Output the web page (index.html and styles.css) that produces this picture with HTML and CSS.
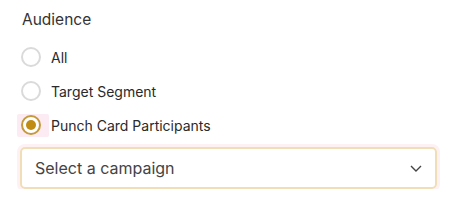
FILE: index.html
```html
<!DOCTYPE html>
<html>
<head lang="en">
    <meta charset="UTF-8">
    <title>Audience</title>
<link rel="stylesheet" href="styles.css">
</head>
<body>
<div class="audience">
    <div class="title">Audience</div>
    <label class="option">
        <span class="radio"></span>
        <span class="text">All</span>
    </label>
    <label class="option">
        <span class="radio"></span>
        <span class="text">Target Segment</span>
    </label>
    <label class="option">
        <span class="focus"><span class="radio checked"></span></span>
        <span class="text">Punch Card Participants</span>
    </label>
    <div class="select">
        <span>Select a campaign</span>
        <svg width="14" height="14" viewBox="0 0 14 14">
            <path d="M2 5 L7 10 L12 5" fill="none" stroke="#444" stroke-width="1.4"/>
        </svg>
    </div>
</div>
</body>
</html>
```

FILE: styles.css
```css
body {
	margin: 0;
	background: #fff;
	font-family: Inter, "Noto Sans", sans-serif;
	color: #2a2a2a;
}
.audience {
	padding: 10px 0 0 21px;
	width: 416px;
}
.title {
	font-size: 15.5px;
	line-height: 20px;
	margin-bottom: 15px;
	margin-left: 1px;
	color: #333;
}
.option {
	display: flex;
	align-items: center;
	height: 24px;
	margin-bottom: 10px;
	font-size: 14px;
}
.radio {
	width: 20px;
	height: 20px;
	border: 2px solid #dadada;
	border-radius: 50%;
	margin-right: 10px;
	box-sizing: border-box;
	position: relative;
	flex-shrink: 0;
	background: #fff;
}
.focus {
	display: flex;
	background: #fdebf3;
	border-radius: 2px;
	padding: 1px 8px 2px 4px;
	margin: -1px 2px -2px -4px;
}
.focus .radio {
	margin-right: 0;
}
.radio.checked {
	border-color: #c49a3a;
}
.radio.checked::after {
	content: "";
	position: absolute;
	left: 3px;
	top: 3px;
	width: 10px;
	height: 10px;
	border-radius: 50%;
	background: #c08d12;
}
.select {
	margin-left: -1px;
	margin-top: 4px;
	height: 42px;
	border: 2px solid #f1ddb6;
	border-radius: 5px;
	box-shadow: 0 0 0 3px #fef1f4;
	display: flex;
	align-items: center;
	justify-content: space-between;
	padding: 0 12px 0 13px;
	font-size: 16px;
	color: #444;
	box-sizing: border-box;
}
```
